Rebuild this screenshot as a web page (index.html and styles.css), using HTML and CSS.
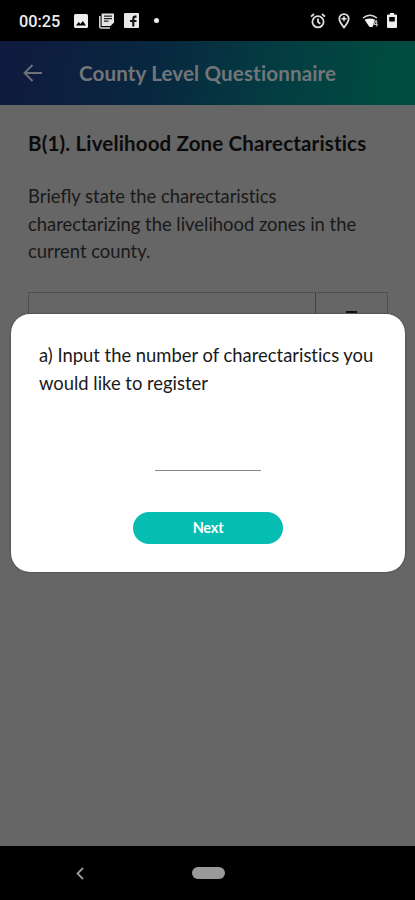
FILE: index.html
```html
<!DOCTYPE html>
<html lang="en">
<head>
<meta charset="utf-8">
<title>County Level Questionnaire</title>
<link rel="stylesheet" href="styles.css">
</head>
<body>
<div class="phone">
  <div class="status">
    <span class="time">00:25</span>
    <svg class="picture" width="14" height="14" viewBox="0 0 14 14"><path fill="#eee" fill-rule="evenodd" d="M1.500 0h11Q14 0 14 1.500v11Q14 14 12.500 14h-11Q0 14 0 12.500v-11Q0 0 1.500 0zM2 11.500h10L8.800 7 6.500 10 4.700 8z"/></svg>
    <svg class="news" width="15" height="16" viewBox="0 0 15 16"><path fill="none" stroke="#ddd" stroke-width="1.500" d="M.8 3v10.500q0 1.500 1.500 1.500H11"/><path fill="#e2e2e2" d="M2.600.5H15v9l-3.500 3.500H2.600z"/><path stroke="#222" stroke-width="1.200" d="M5 3.200h8M5 5.700h8M5 8.200h4.500"/></svg>
    <svg class="social" width="15" height="15" viewBox="0 0 15 15"><rect width="15" height="15" rx="1" fill="#e8e8e8"/><path fill="none" stroke="#111" stroke-width="2.100" d="M12.500 3.600h-1.200Q9.300 3.600 9.300 6v7.500M6 8h6.500"/></svg>
    <span class="dot"></span>
    <svg class="alarm" width="16" height="16" viewBox="0 0 16 16"><g fill="none" stroke="#ddd" stroke-width="1.800"><circle cx="8" cy="8.800" r="5.600"/><path d="M8 5.500v3.600l2.300 1.600M1 3.600 4 1M15 3.600 12 1"/></g></svg>
    <svg class="pin" width="12" height="16" viewBox="0 0 12 16"><path fill="none" stroke="#e2e2e2" stroke-width="1.800" d="M6 14.500C3 10.800 1.300 8.300 1.300 5.800a4.700 4.700 0 0 1 9.400 0C10.700 8.300 9 10.800 6 14.500z"/><path stroke="#eee" stroke-width="1.400" d="M6 3.300v5M3.500 5.800h5"/></svg>
    <svg class="wifi" width="17" height="14" viewBox="0 0 17 14"><path fill="none" stroke="#ddd" stroke-width="1.500" d="M1 4Q8 -1.500 15 4"/><path fill="#f2f2f2" d="M2.500 5.800Q8 3 13 5.800L10.500 13h-3z"/><path fill="none" stroke="#bbb" stroke-width="1.200" d="M14.500 6 12 10.500h4M14.700 7v5.500"/></svg>
    <svg class="battery" width="10" height="15" viewBox="0 0 10 15"><path fill="#eee" fill-rule="evenodd" d="M3 0h4v1.500h2q1 0 1 1V14q0 1-1 1H1q-1 0-1-1V2.500q0-1 1-1h2zM2.200 4v4.500h5.600V4z"/></svg>
  </div>
  <header class="appbar">
    <svg class="arrow" width="20" height="18" viewBox="0 0 20 18"><path fill="none" stroke="#6d7176" stroke-width="1.900" d="M19 9H2M9.500 1 1.500 9l8 8"/></svg>
    <h1>County Level Questionnaire</h1>
  </header>
  <main class="page">
    <h2>B(1). Livelihood Zone Charectaristics</h2>
    <p>Brie<span class="lig">fl</span>y state the charectaristics<br>charectarizing the livelihood zones in the<br>current county.</p>
    <div class="table"><span class="cell"></span><span class="cell narrow"><i class="mark"></i></span></div>
    <section class="dialog">
      <p>a) Input the number of charectaristics you<br>would like to register</p>
      <div class="field"></div>
      <button>Next</button>
    </section>
  </main>
  <nav class="navbar">
    <svg class="back" width="8" height="13" viewBox="0 0 8 13"><path fill="none" stroke="#999" stroke-width="1.800" d="M7 1 1.500 6.500 7 12"/></svg>
    <span class="home"></span>
  </nav>
</div>
</body>
</html>
```
FILE: styles.css
```css
* { box-sizing: border-box; }
body { margin: 0; background: #000; font-family: Lato, sans-serif; }
h1, h2, p { margin: 0; white-space: nowrap; font-variant-ligatures: none; }
svg { display: block; flex: none; }
.lig { font-variant-ligatures: common-ligatures; letter-spacing: 0; }
.phone { width: 415px; height: 900px; display: flex; flex-direction: column; overflow: hidden; }
.status { height: 41px; flex: none; display: flex; align-items: center; padding-left: 19px; background: #000; }
.time { width: 55px; color: #eee; font: 500 16.300px/20px Roboto, sans-serif; padding-top: 2px; }
.news { margin-left: 11px; }
.social { margin-left: 10px; }
.dot { width: 5px; height: 5px; border-radius: 50%; background: #eee; margin-left: 15px; }
.alarm { margin-left: 151px; }
.pin { margin-left: 12px; }
.wifi { margin-left: 12px; }
.battery { margin-left: 8px; }
.appbar { height: 64px; flex: none; display: flex; align-items: center; padding-left: 23px; background: linear-gradient(100deg, #10193f 0%, #08283f 38%, #043b42 64%, #004a40 90%); }
.appbar h1 { margin-left: 36px; color: #727679; font-size: 20.600px; line-height: 24px; font-weight: 700; letter-spacing: 0.120px; }
.page { flex: 1; background: #666; padding: 24px 28px 0; }
.page h2 { color: #0b0b0b; font-size: 20.500px; line-height: 28px; font-weight: 700; letter-spacing: 0.160px; }
.page p { color: #191919; font-size: 18.400px; line-height: 27.700px; }
.page > p { margin-top: 26px; }
.table { display: flex; width: 360px; height: 48px; margin-top: 26px; border: 1px solid #4b5351; }
.cell { flex: 1; }
.narrow { flex: none; width: 72px; border-left: 1px solid #294b44; display: flex; justify-content: center; padding-top: 18px; }
.mark { width: 11px; height: 2px; background: #111; }
.dialog { position: relative; height: 258px; margin: -26px -18px 0 -17px; padding: 28px 28px 0; border-radius: 19px; background: #fff; display: flex; flex-direction: column; box-shadow: 0 0 2px #333; }
.field { align-self: center; width: 106px; height: 73px; border-bottom: 1px solid #888; }
.dialog button { align-self: center; width: 150px; height: 32px; margin-top: 41px; border: 0; border-radius: 16px; background: #05beb1; color: #fff; font: 700 14.500px/20px Lato, sans-serif; letter-spacing: -0.200px; }
.navbar { height: 54px; flex: none; display: flex; align-items: center; padding-left: 76px; background: #000; }
.home { width: 33px; height: 12px; margin-left: 108px; border-radius: 6px; background: #999; }
```
